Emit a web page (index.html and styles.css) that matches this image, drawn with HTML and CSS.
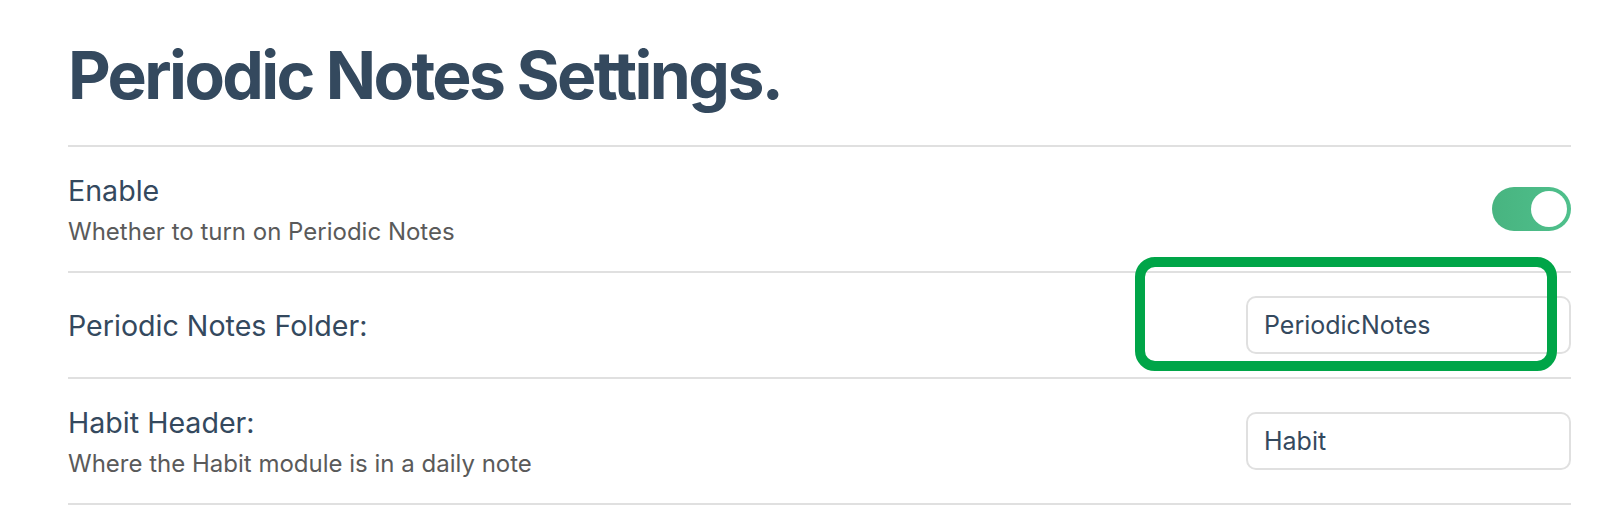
FILE: index.html
```html
<!DOCTYPE html>
<html lang="en">
<head>
  <meta charset="UTF-8">
  <meta name="viewport" content="width=device-width, initial-scale=1.0">
  <title>Periodic Notes Settings</title>
  <link rel="stylesheet" href="styles.css">
</head>
<body>
  <div class="container">
    <h1>Periodic Notes Settings.</h1>
    <div class="settings">
      <div class="setting-item">
        <div class="setting-info">
          <div class="setting-name">Enable</div>
          <div class="setting-desc">Whether to turn on Periodic Notes</div>
        </div>
        <div class="setting-control">
          <div class="toggle is-enabled"></div>
        </div>
      </div>
      <div class="setting-item">
        <div class="setting-info">
          <div class="setting-name">Periodic Notes Folder:</div>
        </div>
        <div class="setting-control">
          <input class="text-input" type="text" value="PeriodicNotes">
          <div class="highlight"></div>
        </div>
      </div>
      <div class="setting-item">
        <div class="setting-info">
          <div class="setting-name">Habit Header:</div>
          <div class="setting-desc">Where the Habit module is in a daily note</div>
        </div>
        <div class="setting-control">
          <input class="text-input" type="text" value="Habit">
        </div>
      </div>
    </div>
  </div>
</body>
</html>
```

FILE: styles.css
```css
body {
  margin: 0;
  font-family: Inter, "Noto Sans", sans-serif;
  background-color: #fff;
  color: #34495e;
}
.container {
  width: 1503px;
  padding-left: 68px;
}
h1 {
  margin: 35px 0 30px;
  font-size: 66px;
  line-height: 80px;
  font-weight: 700;
  letter-spacing: -2.6px;
  color: #34495e;
}
.settings {
  border-bottom: 2px solid #e0e0e0;
}
.setting-item {
  display: flex;
  align-items: center;
  justify-content: space-between;
  padding: 23px 0;
  border-top: 2px solid #e0e0e0;
}
.setting-name {
  font-size: 28.6px;
  line-height: 41px;
  color: #34495e;
}
.setting-desc {
  margin-top: 5px;
  font-size: 24px;
  line-height: 32px;
  color: #5a5a5a;
}
.setting-control {
  position: relative;
}
.toggle {
  position: relative;
  width: 79px;
  height: 44px;
  border-radius: 22px;
  background: linear-gradient(90deg, #48b480, #4fc08c);
}
.toggle::after {
  content: "";
  position: absolute;
  top: 4px;
  right: 4px;
  width: 36px;
  height: 36px;
  border-radius: 50%;
  background: #fff;
}
.text-input {
  display: block;
  box-sizing: border-box;
  width: 325px;
  height: 58px;
  padding: 0 16px;
  border: 2px solid #e0e0e0;
  border-radius: 10px;
  font-family: Inter, "Noto Sans", sans-serif;
  font-size: 25px;
  color: #34495e;
  background: #fff;
}
/* annotation box drawn over the folder input */
.highlight {
  position: absolute;
  left: -111px;
  top: -39px;
  width: 422px;
  height: 114px;
  box-sizing: border-box;
  border: 10px solid #00a548;
  border-radius: 20px;
}
```
